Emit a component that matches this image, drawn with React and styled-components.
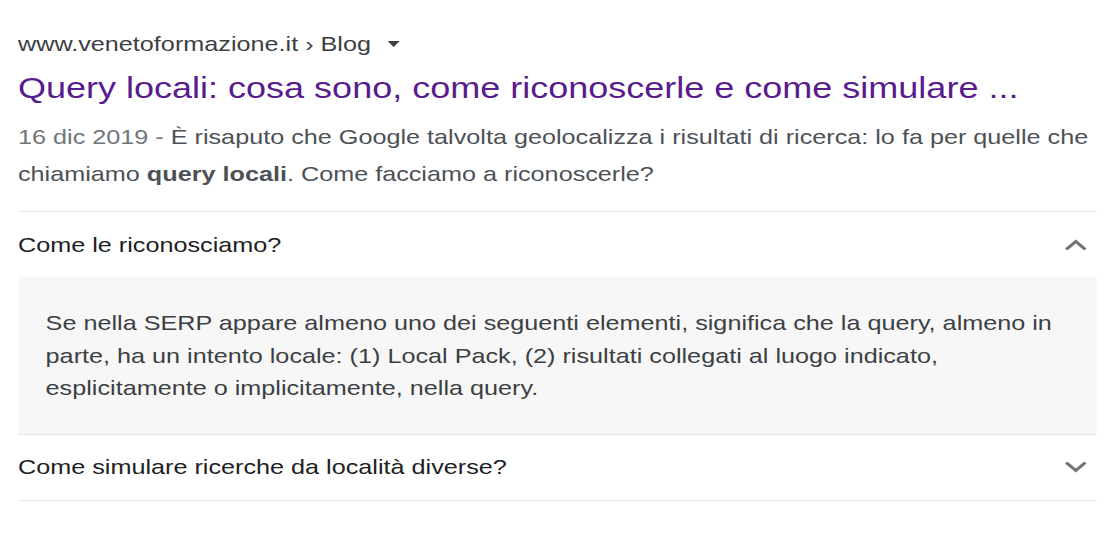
import React, { useState } from "react";
import styled, { createGlobalStyle } from "styled-components";

const GlobalStyle = createGlobalStyle`
  body {
    margin: 0;
    background: #fff;
    font-family: "Liberation Sans", Arial, sans-serif;
  }
`;

const faqs = [
  {
    q: "Come le riconosciamo?",
    a: "Se nella SERP appare almeno uno dei seguenti elementi, significa che la query, almeno in parte, ha un intento locale: (1) Local Pack, (2) risultati collegati al luogo indicato, esplicitamente o implicitamente, nella query.",
  },
  {
    q: "Come simulare ricerche da località diverse?",
    a: "",
  },
];

const Chevron = ({ up }) => (
  <svg width="19" height="14" viewBox="0 0 19 14">
    <polyline
      points={up ? "1.5,11.5 9.5,3.5 17.5,11.5" : "1.5,2.5 9.5,10.5 17.5,2.5"}
      fill="none"
      stroke="#70757a"
      strokeWidth="2.8"
    />
  </svg>
);

const App = () => {
  const [open, setOpen] = useState(0);

  return (
    <Result>
      <GlobalStyle />
      <Crumb>
        www.venetoformazione.it › Blog
        <Caret />
      </Crumb>
      <Title href="#">
        Query locali: cosa sono, come riconoscerle e come simulare ...
      </Title>
      <Snippet>
        <Date>16 dic 2019 - </Date>È risaputo che Google talvolta geolocalizza
        i risultati di ricerca: lo fa per quelle che chiamiamo{" "}
        <b>query locali</b>. Come facciamo a riconoscerle?
      </Snippet>
      <Faq>
        {faqs.map((item, i) => (
          <Item key={item.q}>
            <Question onClick={() => setOpen(open === i ? -1 : i)}>
              {item.q}
              <Chevron up={open === i} />
            </Question>
            {open === i && <Answer>{item.a}</Answer>}
          </Item>
        ))}
      </Faq>
    </Result>
  );
};

// the result card is drawn with a wide, stretched type face
const Result = styled.div`
  display: flex;
  flex-direction: column;
  width: 933px;
  box-sizing: border-box;
  padding: 30px 19px 0 15px;
  color: #202124;
  transform: scaleX(1.2);
  transform-origin: left top;
`;

const Crumb = styled.div`
  display: flex;
  align-items: center;
  font-size: 21px;
  line-height: 28px;
  color: #3c4043;
`;

const Caret = styled.span`
  margin-left: 14px;
  width: 0;
  height: 0;
  border-left: 5px solid transparent;
  border-right: 5px solid transparent;
  border-top: 6px solid #3c4043;
`;

const Title = styled.a`
  margin-top: 8px;
  font-size: 30px;
  line-height: 44px;
  color: #581c8c;
  text-decoration: none;
`;

const Snippet = styled.div`
  margin-top: 8px;
  font-size: 21px;
  line-height: 37px;
  color: #4d5156;

  b {
    color: #4d5156;
  }
`;

const Date = styled.span`
  color: #70757a;
`;

const Faq = styled.div`
  margin-top: 19px;
  border-top: 1px solid #e8e8e8;
`;

const Item = styled.div`
  border-bottom: 1px solid #e8e8e8;
`;

const Question = styled.div`
  display: flex;
  align-items: center;
  justify-content: space-between;
  height: 65px;
  padding-right: 8px;
  font-size: 21px;
  color: #202124;
  cursor: pointer;
`;

const Answer = styled.div`
  background: #f7f7f7;
  padding: 30px 23px 29px;
  font-size: 21px;
  line-height: 32.5px;
  color: #3c4043;
`;

export default App;
